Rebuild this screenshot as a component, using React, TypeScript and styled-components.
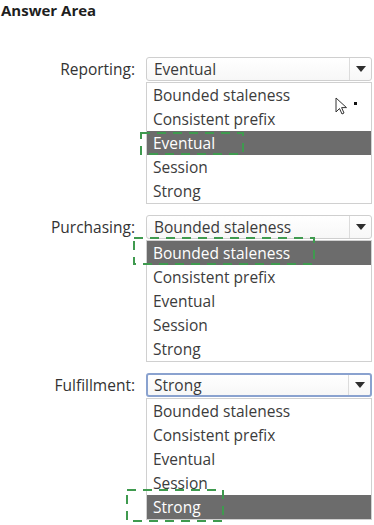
import React from "react";
import styled, { createGlobalStyle } from "styled-components";

const Global = createGlobalStyle`
  html, body { margin: 0; padding: 0; background: #ffffff; }
  body { font-family: "Open Sans", "Noto Sans", sans-serif; }
`;

const Page = styled.div`
  width: 374px;
  height: 525px;
  overflow: hidden;
  padding-top: 1px;
  box-sizing: border-box;
  position: relative;
`;

const Title = styled.div`
  font-weight: 700;
  font-size: 15px;
  line-height: 19px;
  color: #1e1e1e;
  padding-left: 1px;
`;

const Groups = styled.div`
  margin-top: 37px;
  display: flex;
  flex-direction: column;
  gap: 11px;
`;

const Group = styled.div`
  display: grid;
  grid-template-columns: 135px 226px;
  column-gap: 11px;
  align-items: start;
`;

const Label = styled.div`
  text-align: right;
  font-size: 15.5px;
  line-height: 24px;
  color: #333333;
`;

const Control = styled.div`
  position: relative;
  display: flex;
  flex-direction: column;
  gap: 1px;
`;

const SelectBox = styled.div<{ $focused?: boolean }>`
  height: 24px;
  box-sizing: border-box;
  display: flex;
  align-items: stretch;
  border: ${(p) => (p.$focused ? "2px solid #8aa2cf" : "1px solid #cfcfcf")};
  border-radius: 3px;
  background: linear-gradient(#ffffff, #f7f7f7);
`;

const SelectValue = styled.div<{ $focused?: boolean }>`
  flex: 1;
  font-size: 15.5px;
  line-height: ${(p) => (p.$focused ? "20px" : "22px")};
  padding-left: ${(p) => (p.$focused ? "6px" : "7px")};
  color: #3a3a3a;
  white-space: nowrap;
`;

const ArrowCell = styled.div`
  width: 21px;
  border-left: 1px solid #dcdcdc;
  display: flex;
  align-items: center;
  justify-content: center;
`;

const Triangle = styled.div`
  width: 0;
  height: 0;
  border-left: 5px solid transparent;
  border-right: 5px solid transparent;
  border-top: 6px solid #2e2e2e;
`;

const List = styled.div`
  border: 1px solid #d0d0d0;
  background: #ffffff;
  display: flex;
  flex-direction: column;
`;

const Option = styled.div<{ $selected?: boolean }>`
  height: 24px;
  font-size: 15.5px;
  line-height: 24px;
  padding-left: 6px;
  white-space: nowrap;
  color: ${(p) => (p.$selected ? "#ffffff" : "#3c3c3c")};
  background: ${(p) => (p.$selected ? "#6c6c6c" : "transparent")};
`;

const Marker = styled.svg`
  position: absolute;
  overflow: visible;
  pointer-events: none;
`;

const Cursor = styled.svg`
  position: absolute;
  pointer-events: none;
`;

const options = [
  "Bounded staleness",
  "Consistent prefix",
  "Eventual",
  "Session",
  "Strong",
];

type Mark = { left: number; top: number; width: number; height: number };

const groups: {
  label: string;
  value: string;
  focused?: boolean;
  mark: Mark;
  cursor?: boolean;
}[] = [
  {
    label: "Reporting:",
    value: "Eventual",
    mark: { left: -6, top: 75, width: 104, height: 23 },
    cursor: true,
  },
  {
    label: "Purchasing:",
    value: "Bounded staleness",
    mark: { left: -13, top: 22, width: 182, height: 28 },
  },
  {
    label: "Fulfillment:",
    value: "Strong",
    focused: true,
    mark: { left: -20, top: 116, width: 98, height: 33 },
  },
];

function DashedMark({ m }: { m: Mark }) {
  return (
    <Marker
      width={m.width}
      height={m.height}
      style={{ left: m.left, top: m.top }}
    >
      <rect
        x={1}
        y={1}
        width={m.width - 2}
        height={m.height - 2}
        fill="none"
        stroke="#3f9a4f"
        strokeWidth={2}
        strokeDasharray="9 7"
      />
    </Marker>
  );
}

export default function App() {
  return (
    <>
      <Global />
      <Page>
        <Title>Answer Area</Title>
        <Groups>
          {groups.map((g) => (
            <Group key={g.label}>
              <Label>{g.label}</Label>
              <Control>
                <SelectBox $focused={g.focused}>
                  <SelectValue $focused={g.focused}>{g.value}</SelectValue>
                  <ArrowCell>
                    <Triangle />
                  </ArrowCell>
                </SelectBox>
                <List>
                  {options.map((o) => (
                    <Option key={o} $selected={o === g.value}>
                      {o}
                    </Option>
                  ))}
                </List>
                <DashedMark m={g.mark} />
                {g.cursor && (
                  <Cursor
                    width={24}
                    height={20}
                    viewBox="0 0 24 20"
                    style={{ left: 189, top: 40 }}
                  >
                    <path
                      d="M1 1 L1 15 L4.5 11.5 L7 17 L9 16 L6.6 10.6 L11.5 10.6 Z"
                      fill="#ffffff"
                      stroke="#333333"
                      strokeWidth={1}
                      strokeLinejoin="round"
                    />
                    <rect x={19} y={5} width={3} height={3} fill="#111111" />
                  </Cursor>
                )}
              </Control>
            </Group>
          ))}
        </Groups>
      </Page>
    </>
  );
}
